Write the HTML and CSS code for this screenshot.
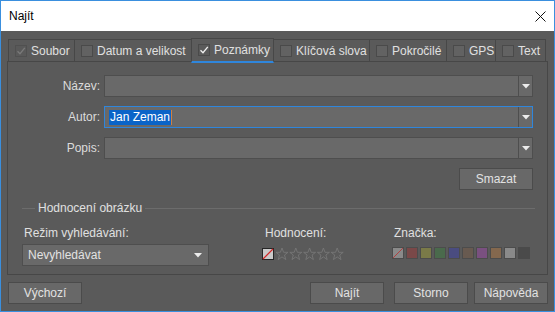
FILE: index.html
```html
<!DOCTYPE html>
<html lang="cs">
<head>
<meta charset="utf-8">
<title>Najít</title>
<link rel="stylesheet" href="styles.css">
</head>
<body>
<div class="window">
  <div class="titlebar">
    <span class="title">Najít</span>
    <svg class="close" width="11" height="11" viewBox="0 0 11 11"><path d="M0.5 0.5 L10.5 10.5 M10.5 0.5 L0.5 10.5" stroke="#111" stroke-width="1" fill="none"/></svg>
  </div>
  <div class="body">
    <div class="tabs">
      <div class="tab t-soubor"><span class="cb cb-dim"><svg viewBox="0 0 12 12" width="12" height="12"><path d="M2.5 6.2 L5 8.7 L9.8 2.8" stroke="#7a7a7a" stroke-width="1.3" fill="none"/></svg></span>Soubor</div>
      <div class="tab t-datum"><span class="cb"></span>Datum a velikost</div>
      <div class="tab tab-active t-pozn"><span class="cb cb-on"><svg viewBox="0 0 12 12" width="12" height="12"><path d="M2.5 6.2 L5 8.7 L9.8 2.8" stroke="#f2f2f2" stroke-width="1.3" fill="none"/></svg></span>Poznámky</div>
      <div class="tab t-klic"><span class="cb"></span>Klíčová slova</div>
      <div class="tab t-pokr"><span class="cb"></span>Pokročilé</div>
      <div class="tab t-gps"><span class="cb"></span>GPS</div>
      <div class="tab t-text"><span class="cb"></span>Text</div>
    </div>
    <div class="panel">
      <div class="form">
        <span class="lbl">Název:</span>
        <div class="combo"><span class="combo-text"></span><span class="combo-btn"><svg width="8" height="5" viewBox="0 0 8 5"><path d="M0 0 H8 L4 4.5 Z" fill="#ececec"/></svg></span></div>
        <span class="lbl">Autor:</span>
        <div class="combo combo-focus"><span class="combo-text"><span class="sel">Jan Zeman</span><span class="caret"></span></span><span class="combo-btn"><svg width="8" height="5" viewBox="0 0 8 5"><path d="M0 0 H8 L4 4.5 Z" fill="#ececec"/></svg></span></div>
        <span class="lbl">Popis:</span>
        <div class="combo"><span class="combo-text"></span><span class="combo-btn"><svg width="8" height="5" viewBox="0 0 8 5"><path d="M0 0 H8 L4 4.5 Z" fill="#ececec"/></svg></span></div>
      </div>
      <div class="clear-row"><button class="btn">Smazat</button></div>
      <div class="group">
        <div class="group-head"><span class="gline gline-short"></span><span class="gtitle">Hodnocení obrázku</span><span class="gline"></span></div>
        <div class="group-body">
          <div class="col col-mode">
            <span class="col-lbl">Režim vyhledávání:</span>
            <div class="select"><span>Nevyhledávat</span><svg width="8" height="5" viewBox="0 0 8 5"><path d="M0 0 H8 L4 4.5 Z" fill="#ececec"/></svg></div>
          </div>
          <div class="col col-rating">
            <span class="col-lbl lbl-rating">Hodnocení:</span>
            <div class="rating">
              <span class="none-box"><svg width="12" height="12" viewBox="0 0 12 12"><path d="M1 11 L11 1" stroke="#d42525" stroke-width="1.2"/></svg></span>
              <svg class="stars" width="70" height="14" viewBox="0 0 70 14">
                <g fill="none" stroke="#777777" stroke-width="0.9">
                  <path d="M7 1 L8.6 5.3 L13 5.3 L9.5 8 L10.8 12.6 L7 9.9 L3.2 12.6 L4.5 8 L1 5.3 L5.4 5.3 Z"/>
                  <path transform="translate(13.8 0)" d="M7 1 L8.6 5.3 L13 5.3 L9.5 8 L10.8 12.6 L7 9.9 L3.2 12.6 L4.5 8 L1 5.3 L5.4 5.3 Z"/>
                  <path transform="translate(27.6 0)" d="M7 1 L8.6 5.3 L13 5.3 L9.5 8 L10.8 12.6 L7 9.9 L3.2 12.6 L4.5 8 L1 5.3 L5.4 5.3 Z"/>
                  <path transform="translate(41.4 0)" d="M7 1 L8.6 5.3 L13 5.3 L9.5 8 L10.8 12.6 L7 9.9 L3.2 12.6 L4.5 8 L1 5.3 L5.4 5.3 Z"/>
                  <path transform="translate(55.2 0)" d="M7 1 L8.6 5.3 L13 5.3 L9.5 8 L10.8 12.6 L7 9.9 L3.2 12.6 L4.5 8 L1 5.3 L5.4 5.3 Z"/>
                </g>
              </svg>
            </div>
          </div>
          <div class="col col-label">
            <span class="col-lbl lbl-tag">Značka:</span>
            <div class="swatches">
              <span class="sw sw-none"><svg width="12" height="12" viewBox="0 0 12 12"><path d="M1 11 L11 1" stroke="#b04040" stroke-width="1"/></svg></span>
              <span class="sw sw-red"></span>
              <span class="sw sw-yellow"></span>
              <span class="sw sw-green"></span>
              <span class="sw sw-blue"></span>
              <span class="sw sw-brown"></span>
              <span class="sw sw-purple"></span>
              <span class="sw sw-tan"></span>
              <span class="sw sw-grey"></span>
              <span class="sw sw-dark"></span>
            </div>
          </div>
        </div>
      </div>
    </div>
    <div class="footer">
      <button class="btn">Výchozí</button>
      <span class="spacer"></span>
      <button class="btn btn-find">Najít</button>
      <button class="btn btn-cancel">Storno</button>
      <button class="btn">Nápověda</button>
    </div>
  </div>
</div>
</body>
</html>
```

FILE: styles.css
```css
* { box-sizing: border-box; }
html, body { margin: 0; padding: 0; }
body {
  width: 555px;
  height: 312px;
  overflow: hidden;
  font-family: "Liberation Sans", Arial, sans-serif;
  font-size: 12px;
  color: #e2e2e2;
}
.window {
  width: 555px;
  height: 312px;
  border: 1px solid #3a8fde;
  background: #5a5a5a;
  display: flex;
  flex-direction: column;
}
.titlebar {
  height: 30px;
  background: #ffffff;
  display: flex;
  align-items: center;
  padding: 0 9px 0 8px;
  flex: none;
}
.title { color: #000; font-size: 12px; flex: 1; }
.close { display: block; margin-right: -1px; }

.body {
  flex: 1;
  padding: 8px 6px 0 6px;
  display: flex;
  flex-direction: column;
}

/* tabs */
.tabs {
  display: flex;
  align-items: flex-end;
  height: 22px;
  padding-left: 1px;
}
.tab {
  height: 22px;
  flex: none;
  display: flex;
  align-items: center;
  gap: 4px;
  padding: 0 0 0 6px;
  border: 1px solid #474747;
  border-bottom: none;
  margin-left: -1px;
  color: #e0e0e0;
  white-space: nowrap;
  overflow: hidden;
}
.tab:first-child { margin-left: 0; }
.t-soubor { width: 67px; }
.t-datum { width: 118px; }
.t-pozn { width: 83px; }
.t-klic { width: 97px; }
.t-pokr { width: 78px; }
.t-gps { width: 50px; }
.t-text { width: 51px; }
.tab-active {
  height: 25px;
  margin-bottom: -2px;
  position: relative;
  z-index: 1;
  background: #5c5c5c;
  border-bottom: 2px solid #2f86dc;
  padding-bottom: 1px;
}
.cb {
  width: 12px;
  height: 12px;
  flex: none;
  border: 1px solid #4a4a4a;
  background: #626262;
  display: flex;
  align-items: center;
  justify-content: center;
}
.cb svg { display: block; margin: -1px; }
.cb-dim { background: #595959; border-color: #505050; }
.cb-on { background: #5a5a5a; border-color: #4a4a4a; }

/* panel */
.panel {
  border: 1px solid #474747;
  height: 214px;
  padding: 13px 14px 0 0;
  display: flex;
  flex-direction: column;
}
.form {
  display: grid;
  grid-template-columns: 92px 1fr;
  column-gap: 4px;
  row-gap: 9px;
  align-items: center;
}
.lbl { text-align: right; color: #dcdcdc; }
.combo {
  height: 22px;
  border: 1px solid #4e4e4e;
  background: #696969;
  display: flex;
}
.combo-focus { border-color: #2f86dc; }
.combo-text {
  flex: 1;
  display: flex;
  align-items: center;
  padding-left: 4px;
}
.sel {
  background: #0a64c8;
  color: #fff;
  line-height: 15px;
  padding: 0 1px;
}
.caret { width: 1px; height: 15px; background: #d08040; }
.combo-btn {
  width: 14px;
  flex: none;
  border-left: 1px solid #4e4e4e;
  display: flex;
  align-items: center;
  justify-content: center;
}
.combo-btn svg { display: block; }

.clear-row {
  display: flex;
  justify-content: flex-end;
  margin-top: 9px;
}

.btn {
  width: 74px;
  height: 22px;
  font-family: inherit;
  font-size: 12px;
  color: #e2e2e2;
  background: #686868;
  border: 1px solid #4b4b4b;
  padding: 0;
  margin: 0;
}

/* group */
.group {
  margin: 11px -2px 0 14px;
}
.group-head {
  display: flex;
  align-items: center;
  height: 14px;
  gap: 3px;
}
.gline { flex: 1; height: 1px; background: #6c6c6c; }
.gline-short { flex: none; width: 13px; }
.gtitle { color: #e0e0e0; }

.group-body {
  display: flex;
  margin-top: 11px;
}
.col { display: flex; flex-direction: column; gap: 4px; }
.col-lbl { line-height: 14px; color: #e0e0e0; padding-left: 2px; }
.col-mode { width: 187px; }
.col-rating { width: 130px; margin-left: 53px; }
.lbl-rating { padding-left: 3px; }
.select {
  height: 22px;
  border: 1px solid #4e4e4e;
  background: #696969;
  display: flex;
  align-items: center;
  justify-content: space-between;
  padding: 0 6px 0 5px;
}
.select svg { display: block; }
.rating {
  display: flex;
  align-items: center;
  margin-top: 3px;
  gap: 1px;
}
.none-box {
  width: 12px;
  height: 12px;
  border: 1px solid #262626;
  background: #cacaca;
  display: block;
}
.none-box svg { display: block; margin: -1px; }
.stars { display: block; }
.swatches {
  display: flex;
  gap: 2px;
  margin-top: 3px;
}
.sw {
  width: 12px;
  height: 12px;
  border: 1px solid #4c4c4c;
  display: block;
}
.sw svg { display: block; margin: -1px; }
.sw-none { background: #8a8a8a; }
.sw-red { background: #7a4848; }
.sw-yellow { background: #7a7a48; }
.sw-green { background: #4a6a4c; }
.sw-blue { background: #4a4c80; }
.sw-brown { background: #685a50; }
.sw-purple { background: #7a5080; }
.sw-tan { background: #84684e; }
.sw-grey { background: #8a8a8a; }
.sw-dark { background: #4a4a4a; border-color: #4a4a4a; }

/* footer */
.footer {
  display: flex;
  margin-top: 7px;
  padding: 0 0 0 1px;
}
.spacer { flex: 1; }
.btn-find { margin-right: 10px; }
.btn-cancel { margin-right: 6px; }
```
